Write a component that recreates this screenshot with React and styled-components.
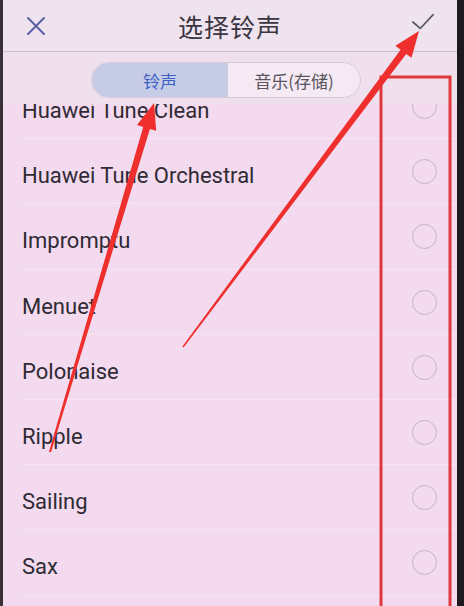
import React from "react";
import styled, { createGlobalStyle } from "styled-components";

const Global = createGlobalStyle`
  html, body { margin: 0; padding: 0; overflow: hidden; }
  body { font-family: Roboto, "Noto Sans CJK SC", sans-serif; }
`;

const Page = styled.div`
  position: relative;
  width: 464px;
  height: 606px;
  overflow: hidden;
  display: flex;
  background: #f3daee;
`;

const Bezel = styled.div`
  width: ${(p) => p.$w}px;
  flex: none;
  background: ${(p) => p.$c};
`;

const Screen = styled.div`
  flex: 1;
  min-width: 0;
  display: flex;
  flex-direction: column;
`;

const Header = styled.div`
  height: 51px;
  flex: none;
  display: flex;
  align-items: center;
  justify-content: space-between;
  padding: 0 22px 0 21px;
  background: #efe3ef;
  border-bottom: 1px solid #cdbfcc;
  position: relative;
`;

const Title = styled.div`
  position: absolute;
  left: 0;
  right: 0;
  text-align: center;
  font-family: "Noto Sans CJK SC", sans-serif;
  font-size: 25px;
  color: #3a3540;
  letter-spacing: 1px;
  pointer-events: none;
`;

const IconBtn = styled.div`
  width: 24px;
  height: 24px;
  display: flex;
  align-items: center;
  justify-content: center;
  margin-top: ${(p) => p.$dy || 0}px;
`;

const TabArea = styled.div`
  height: 52px;
  flex: none;
  display: flex;
  justify-content: center;
  align-items: flex-start;
  padding-top: 10px;
  box-sizing: border-box;
  background: #f0e0ee;
  padding-right: 8px;
`;

const Segmented = styled.div`
  display: flex;
  width: 270px;
  height: 36px;
  border-radius: 18px;
  border: 1px solid #dac9d8;
  box-sizing: border-box;
  overflow: hidden;
  background: #f5e9f3;
`;

const Segment = styled.div`
  flex: ${(p) => (p.$active ? "0 0 136px" : "1")};
  display: flex;
  align-items: center;
  justify-content: center;
  font-family: "Noto Sans CJK SC", sans-serif;
  font-size: 17px;
  color: ${(p) => (p.$active ? "#3c62c4" : "#5a5460")};
  background: ${(p) => (p.$active ? "#c6cbe6" : "transparent")};
`;

const ListViewport = styled.div`
  flex: 1;
  overflow: hidden;
`;

const List = styled.div`
  margin-top: -30px;
`;

const Row = styled.div`
  height: 65.2px;
  box-sizing: border-box;
  display: flex;
  align-items: center;
  justify-content: space-between;
  padding: 0 20px 0 19px;
  position: relative;
  &::after {
    content: "";
    position: absolute;
    left: 19px;
    right: 0;
    bottom: 0;
    height: 1px;
    background: #f7e6f2;
  }
`;

const RowText = styled.div`
  font-family: Roboto, sans-serif;
  font-size: 22px;
  color: #2f2a34;
  padding-top: 8px;
`;

const Radio = styled.div`
  width: 25px;
  height: 25px;
  box-sizing: border-box;
  border-radius: 50%;
  border: 1.5px solid #c4b4c3;
`;

const Overlay = styled.svg`
  position: absolute;
  left: 0;
  top: 0;
  width: 464px;
  height: 606px;
  pointer-events: none;
`;

function arrowPoints(tail, tip, w0, w1, headLen, headHalf) {
  const dx = tip[0] - tail[0];
  const dy = tip[1] - tail[1];
  const len = Math.hypot(dx, dy);
  const ux = dx / len, uy = dy / len;
  const nx = -uy, ny = ux;
  const bx = tip[0] - ux * headLen, by = tip[1] - uy * headLen;
  const p = (x, y) => `${x.toFixed(1)},${y.toFixed(1)}`;
  return [
    p(tail[0] + nx * w0, tail[1] + ny * w0),
    p(bx + nx * w1, by + ny * w1),
    p(bx + nx * headHalf, by + ny * headHalf),
    p(tip[0], tip[1]),
    p(bx - nx * headHalf, by - ny * headHalf),
    p(bx - nx * w1, by - ny * w1),
    p(tail[0] - nx * w0, tail[1] - ny * w0),
  ].join(" ");
}

const songs = [
  "Huawei Tune Clean",
  "Huawei Tune Orchestral",
  "Impromptu",
  "Menuet",
  "Polonaise",
  "Ripple",
  "Sailing",
  "Sax",
];

export default function App() {
  return (
    <>
      <Global />
      <Page>
        <Bezel $w={3} $c="#3a3038" />
        <Screen>
          <Header>
            <IconBtn $dy={1}>
              <svg width="22" height="22" viewBox="0 0 22 22">
                <path d="M3 3 L19 19 M19 3 L3 19" stroke="#5b5fa3" strokeWidth="2" strokeLinecap="round" />
              </svg>
            </IconBtn>
            <Title>选择铃声</Title>
            <IconBtn $dy={-8}>
              <svg width="26" height="22" viewBox="0 0 26 22">
                <path d="M2 11 L10 18 L24 3" stroke="#5a5662" strokeWidth="1.8" fill="none" strokeLinecap="round" strokeLinejoin="round" />
              </svg>
            </IconBtn>
          </Header>
          <TabArea>
            <Segmented>
              <Segment $active>铃声</Segment>
              <Segment>音乐(存储)</Segment>
            </Segmented>
          </TabArea>
          <ListViewport>
            <List>
              {songs.map((s) => (
                <Row key={s}>
                  <RowText>{s}</RowText>
                  <Radio />
                </Row>
              ))}
            </List>
          </ListViewport>
        </Screen>
        <Bezel $w={7} $c="#1c1a1e" />
        <Overlay viewBox="0 0 464 606">
          <rect x="381" y="77" width="69" height="540" fill="none" stroke="#e0383a" strokeWidth="3" />
          <polygon points={arrowPoints([50, 452], [154, 103], 1, 3.5, 26, 10)} fill="#ee2f2e" />
          <polygon points={arrowPoints([183, 347], [419, 31], 0.8, 3.5, 26, 10)} fill="#ee2f2e" />
        </Overlay>
      </Page>
    </>
  );
}
